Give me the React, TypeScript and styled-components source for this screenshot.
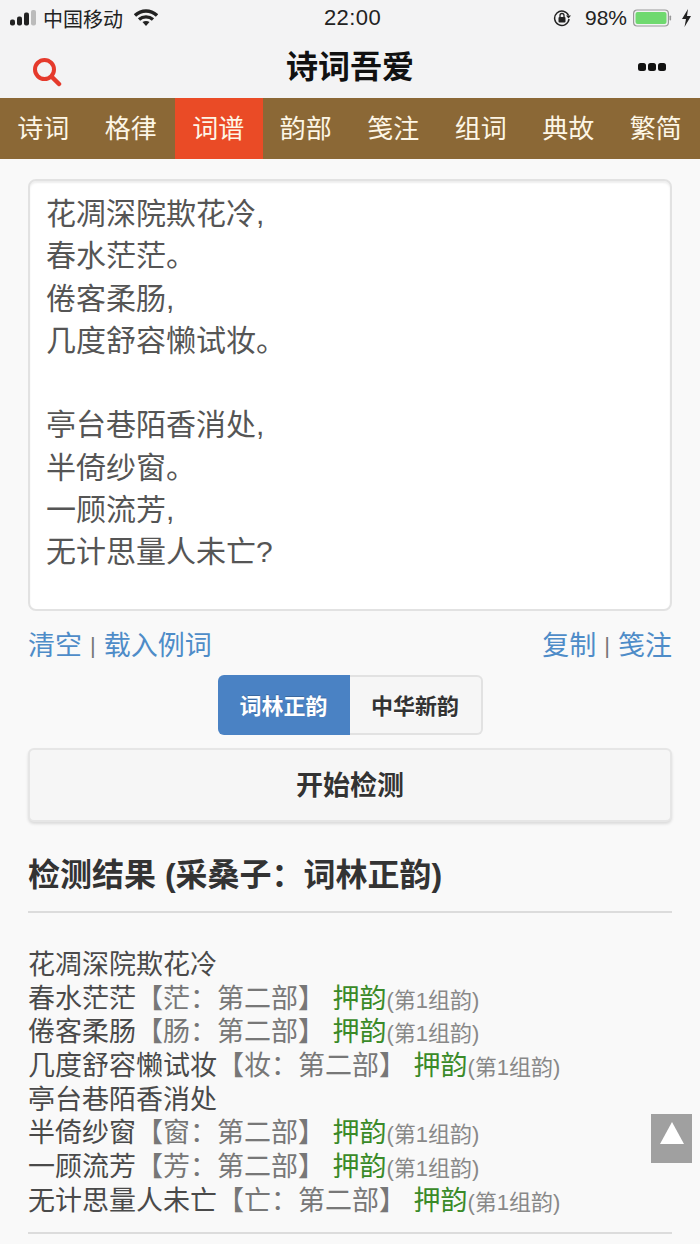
import React from 'react'
import styled, {createGlobalStyle} from 'styled-components'

const FONT = `"Liberation Sans", "Noto Sans CJK SC", sans-serif`
const COLON = '\uFF1A'

const GlobalStyle = createGlobalStyle`
    html, body, #root {
        margin: 0;
        padding: 0;
        width: 100%;
        height: 100%;
        overflow: hidden;
    }

    body {
        background: #f9f9f9;
        font-family: ${FONT};
    }
`

const Page = styled.div`
    position: relative;
    width: 700px;
    height: 1244px;
    overflow: hidden;
    background: #f9f9f9;
`

const Top = styled.div`
    height: 98px;
    background: #f3f3f4;
    display: flex;
    flex-direction: column;
`

const StatusBar = styled.div`
    height: 36px;
    display: flex;
    align-items: center;
    justify-content: space-between;
    padding: 0 8px 0 10px;
    color: #222;
    font-size: 20px;
`

const StatusLeft = styled.div`
    flex: 1;
    display: flex;
    align-items: center;
    gap: 6px;
`

const StatusRight = styled.div`
    flex: 1;
    display: flex;
    align-items: center;
    justify-content: flex-end;
`

const Percent = styled.span`
    font-size: 21px;
    margin: 0 6px 0 14px;
`

const BatterySlot = styled.span`
    display: flex;
    margin-right: 9px;
`

const Time = styled.div`
    font-size: 22px;
    letter-spacing: 0.4px;
    margin-left: 3px;
`

const Header = styled.div`
    flex: 1;
    display: flex;
    align-items: center;
    justify-content: space-between;
    padding: 0 34px 6px 32px;
`

const Title = styled.div`
    font-size: 32px;
    font-weight: 700;
    color: #111;
`

const SearchSlot = styled.span`
    display: flex;
    margin-top: 16px;
`

const MoreSlot = styled.span`
    display: flex;
    margin-top: 6px;
`

const Nav = styled.div`
    height: 61px;
    background: #8b6836;
    display: grid;
    grid-template-columns: repeat(8, 1fr);
`

const NavItem = styled.div<{ $active?: boolean }>`
    display: flex;
    align-items: center;
    justify-content: center;
    padding: 0 1px 4px 0;
    font-size: 26px;
    color: #fdf6e6;
    background: ${(p) => (p.$active ? '#ea4b26' : 'transparent')};
`

const Content = styled.div`
    padding: 20px 28px 0;
`

const PoemBox = styled.div`
    box-sizing: border-box;
    height: 432px;
    background: #fff;
    border: 2px solid #e2e2e2;
    border-radius: 8px;
    box-shadow: inset 0 2px 2px rgba(0, 0, 0, 0.07);
    padding: 12px 16px;
    font-size: 30px;
    line-height: 42.3px;
    color: #555;
    white-space: pre-line;
`

const LinkRow = styled.div`
    display: flex;
    justify-content: space-between;
    margin-top: 13px;
    height: 38px;
    align-items: center;
    font-size: 27px;
    color: #4e8cc8;
`

const Sep = styled.span`
    color: #777;
    font-size: 22px;
    margin: 0 8px;
    position: relative;
    top: -2px;
`

const ToggleRow = styled.div`
    display: flex;
    justify-content: center;
    margin-top: 13px;
`

const Toggle = styled.div<{ $on?: boolean }>`
    box-sizing: border-box;
    width: ${(p) => (p.$on ? '132px' : '133px')};
    height: 60px;
    display: flex;
    align-items: center;
    justify-content: center;
    padding-bottom: 3px;
    font-size: 22px;
    font-weight: 700;
    color: ${(p) => (p.$on ? '#fff' : '#333')};
    background: ${(p) => (p.$on ? '#4a82c4' : '#f6f6f6')};
    border: ${(p) => (p.$on ? 'none' : '2px solid #e2e2e2')};
    border-left: none;
    border-radius: ${(p) => (p.$on ? '6px 0 0 6px' : '0 6px 6px 0')};
    text-shadow: ${(p) => (p.$on ? '0 -1px 0 rgba(0, 0, 0, 0.2)' : '0 1px 0 #fff')};
`

const CheckButton = styled.div`
    box-sizing: border-box;
    height: 74px;
    margin-top: 13px;
    display: flex;
    align-items: center;
    justify-content: center;
    padding-bottom: 3px;
    font-size: 27px;
    font-weight: 700;
    color: #333;
    background: #f6f6f6;
    border: 2px solid #e6e6e6;
    border-radius: 6px;
    box-shadow: 0 2px 3px rgba(0, 0, 0, 0.12);
    text-shadow: 0 1px 0 #fff;
`

const Heading = styled.div`
    margin-top: 32px;
    height: 42px;
    line-height: 42px;
    font-size: 32px;
    font-weight: 700;
    color: #333;
`

const Rule = styled.div`
    height: 2px;
    background: #dcdcdc;
`

const ResultRule = styled(Rule)`
    margin-top: 15px;
`

const Results = styled.div`
    padding: 36px 0 13px;
    font-size: 27px;
    color: #4a4a4a;
`

const ResultLine = styled.div`
    height: 33.7px;
    line-height: 33.7px;
    white-space: nowrap;
`

const Part = styled.span`
    color: #777;
`

const Rhyme = styled.span`
    color: #3a8a28;
`

const Group = styled.span`
    color: #888;
    font-size: 22px;
    line-height: 1;
`

const ScrollTop = styled.div`
    position: absolute;
    left: 651px;
    top: 1114px;
    width: 41px;
    height: 49px;
    background: #a0a0a0;
    display: flex;
    justify-content: center;
    padding-top: 8px;
    box-sizing: border-box;
`

const poem = `花凋深院欺花冷,
春水茫茫。
倦客柔肠,
几度舒容懒试妆。

亭台巷陌香消处,
半倚纱窗。
一顾流芳,
无计思量人未亡?`

const tabs = ['诗词', '格律', '词谱', '韵部', '笺注', '组词', '典故', '繁简']

const results: Array<[string, string?]> = [
    ['花凋深院欺花冷'],
    ['春水茫茫', '茫'],
    ['倦客柔肠', '肠'],
    ['几度舒容懒试妆', '妆'],
    ['亭台巷陌香消处'],
    ['半倚纱窗', '窗'],
    ['一顾流芳', '芳'],
    ['无计思量人未亡', '亡'],
]

const Signal = () => (
    <svg width="27" height="18" viewBox="0 0 27 18">
        <rect x="0" y="10.5" width="5" height="6" rx="2" fill="#222"/>
        <rect x="7" y="7.5" width="5" height="9" rx="2" fill="#222"/>
        <rect x="14" y="3.5" width="5" height="13" rx="2" fill="#222"/>
        <rect x="21" y="1" width="5" height="15.5" rx="2" fill="#bbb"/>
    </svg>
)

const Wifi = () => (
    <svg width="24" height="18" viewBox="0 0 24 18" style={{marginLeft: 5}}>
        <path d="M1 6.5C7.5 .5 16.5 .5 23 6.5" fill="none" stroke="#222" strokeWidth="3.4"/>
        <path d="M5 10.5C9 7 15 7 19 10.5" fill="none" stroke="#222" strokeWidth="3.4"/>
        <path d="M8.5 13L12 17L15.5 13C13.5 11.5 10.5 11.5 8.5 13Z" fill="#222"/>
    </svg>
)

const RotationLock = () => (
    <svg width="18" height="18" viewBox="0 0 18 18">
        <path d="M15.5 6.5A7.2 7.2 0 1 0 16 10" fill="none" stroke="#222" strokeWidth="1.5"/>
        <path d="M13 6.5L18 6.5L15.5 9.5Z" fill="#222"/>
        <rect x="5.5" y="8" width="7" height="5.5" rx="1" fill="#222"/>
        <path d="M7 8V6.5a2 2 0 0 1 4 0V8" fill="none" stroke="#222" strokeWidth="1.3"/>
    </svg>
)

const Battery = () => (
    <svg width="39" height="18" viewBox="0 0 39 18">
        <rect x="0.6" y="1" width="34.8" height="16" rx="3.5" fill="none" stroke="#999" strokeWidth="1.2"/>
        <rect x="2.5" y="3" width="31" height="12" rx="2" fill="#6fd96f"/>
        <rect x="36.5" y="6.5" width="1.6" height="5" rx="0.8" fill="#999"/>
    </svg>
)

const Bolt = () => (
    <svg width="11" height="18" viewBox="0 0 11 18">
        <path d="M7 0L1 10H5L3.5 18L10 7H6Z" fill="#222"/>
    </svg>
)

const SearchIcon = () => (
    <svg width="30" height="30" viewBox="0 0 30 30">
        <circle cx="12.5" cy="12.5" r="9.5" fill="none" stroke="#e53a2c" strokeWidth="4"/>
        <path d="M20 20L27 27" stroke="#e53a2c" strokeWidth="4.5" strokeLinecap="round"/>
    </svg>
)

const MoreIcon = () => (
    <svg width="28" height="10" viewBox="0 0 28 10">
        <rect x="0" y="1" width="8" height="8" rx="2.5" fill="#111"/>
        <rect x="10" y="1" width="8" height="8" rx="2.5" fill="#111"/>
        <rect x="20" y="1" width="8" height="8" rx="2.5" fill="#111"/>
    </svg>
)

const App: React.FC = () => (
    <Page>
        <GlobalStyle/>
        <Top>
            <StatusBar>
                <StatusLeft>
                    <Signal/>
                    <span>中国移动</span>
                    <Wifi/>
                </StatusLeft>
                <Time>22:00</Time>
                <StatusRight>
                    <RotationLock/>
                    <Percent>98%</Percent>
                    <BatterySlot><Battery/></BatterySlot>
                    <Bolt/>
                </StatusRight>
            </StatusBar>
            <Header>
                <SearchSlot><SearchIcon/></SearchSlot>
                <Title>诗词吾爱</Title>
                <MoreSlot><MoreIcon/></MoreSlot>
            </Header>
        </Top>
        <Nav>
            {tabs.map((tab) => (
                <NavItem key={tab} $active={tab === '词谱'}>{tab}</NavItem>
            ))}
        </Nav>
        <Content>
            <PoemBox>{poem}</PoemBox>
            <LinkRow>
                <span>清空<Sep>|</Sep>载入例词</span>
                <span>复制<Sep>|</Sep>笺注</span>
            </LinkRow>
            <ToggleRow>
                <Toggle $on>词林正韵</Toggle>
                <Toggle>中华新韵</Toggle>
            </ToggleRow>
            <CheckButton>开始检测</CheckButton>
            <Heading>检测结果 (采桑子{COLON}词林正韵)</Heading>
            <ResultRule/>
            <Results>
                {results.map(([line, rhyme]) => (
                    <ResultLine key={line}>
                        {line}
                        {rhyme && (
                            <>
                                <Part>【{rhyme}{COLON}第二部】</Part> <Rhyme>押韵</Rhyme><Group>(第1组韵)</Group>
                            </>
                        )}
                    </ResultLine>
                ))}
            </Results>
            <Rule/>
        </Content>
        <ScrollTop>
            <svg width="24" height="22" viewBox="0 0 24 22">
                <path d="M12 0L24 22H0Z" fill="#fff"/>
            </svg>
        </ScrollTop>
    </Page>
)

export default App
